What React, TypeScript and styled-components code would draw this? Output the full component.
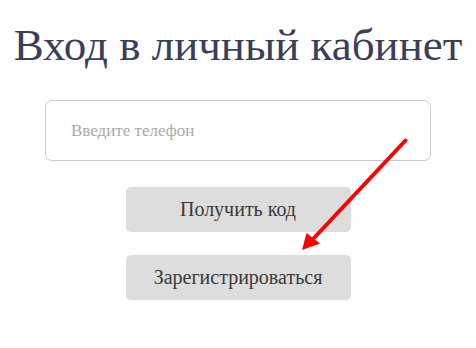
import styled, { createGlobalStyle } from 'styled-components';

const SERIF = `'Liberation Serif', 'Times New Roman', serif`;

const GlobalStyle = createGlobalStyle`
  body {
    margin: 0;
    background: #fff;
    font-family: ${SERIF};
  }
`;

const Page = styled.div`
  position: relative;
  display: flex;
  flex-flow: column nowrap;
  align-items: center;
  width: 476px;
  height: 348px;
  padding-top: 19px;
  box-sizing: border-box;
`;

const Title = styled.h1`
  margin: 0;
  font-family: ${SERIF};
  font-size: 45px;
  font-weight: normal;
  line-height: 52px;
  color: #3b3e5a;
  white-space: nowrap;
`;

const PhoneInput = styled.input`
  margin-top: 29px;
  width: 386px;
  height: 61px;
  box-sizing: border-box;
  padding: 0 25px;
  border: solid #cccccc 1px;
  border-radius: 7px;
  font-family: ${SERIF};
  font-size: 17px;
  color: #333;
  outline: none;
  &::placeholder {
    color: #a9a9a9;
  }
`;

const Button = styled.button<{ gap: number }>`
  margin-top: ${({ gap }) => gap}px;
  width: 225px;
  height: 45px;
  border: none;
  border-radius: 5px;
  background-color: #dddddd;
  font-family: ${SERIF};
  font-size: 20px;
  color: #3a3a3a;
  cursor: pointer;
`;

const Arrow = styled.svg`
  position: absolute;
  left: 0;
  top: 0;
  pointer-events: none;
`;

export default function App() {
  return (
    <>
      <GlobalStyle />
      <Page>
        <Title>Вход в личный кабинет</Title>
        <PhoneInput placeholder='Введите телефон' />
        <Button gap={26}>Получить код</Button>
        <Button gap={23}>Зарегистрироваться</Button>
        <Arrow width='476' height='348' viewBox='0 0 476 348'>
          <line x1='405.5' y1='140.5' x2='314' y2='238' stroke='#ff0000' strokeWidth='4' strokeLinecap='round' />
          <polygon points='302,250 306.5,233 320,243.5' fill='#ff0000' />
        </Arrow>
      </Page>
    </>
  );
}
